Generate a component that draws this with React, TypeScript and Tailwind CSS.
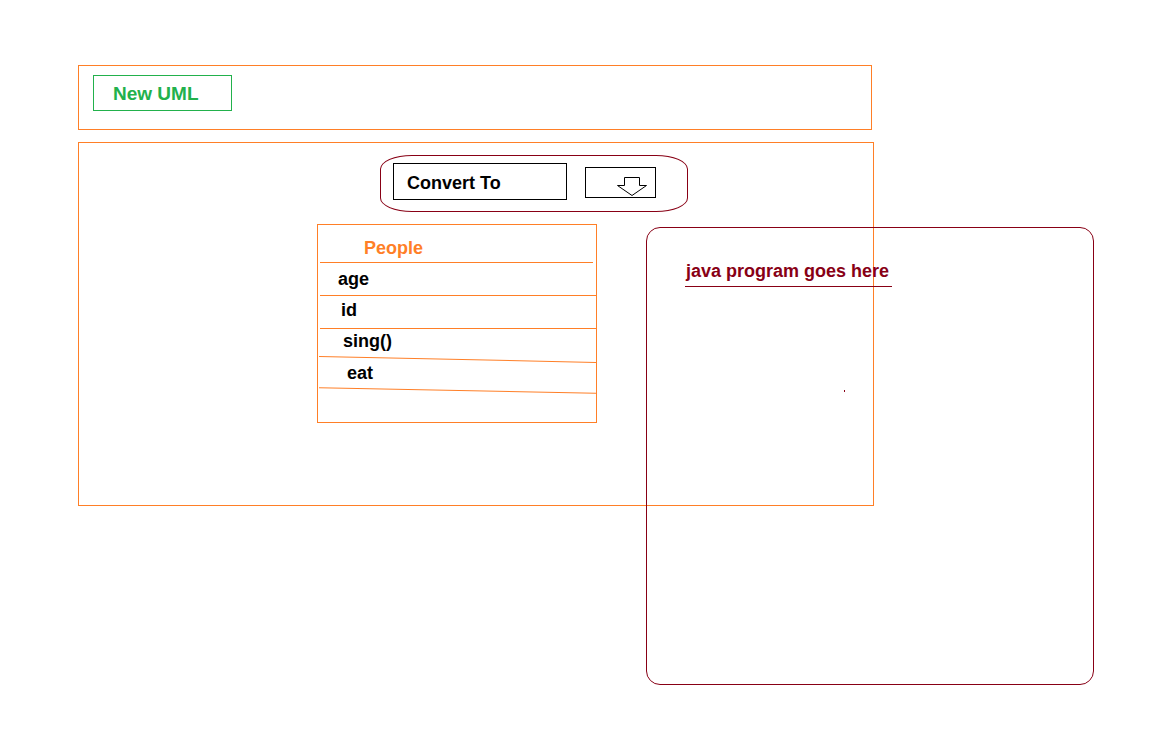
import type { FC } from "react";

const fields = [
  { name: "age", pt: "pt-[7px]", pl: "pl-[18px]" },
  { name: "id", pt: "pt-[5px]", pl: "pl-[21px]" },
];

const DownArrow: FC = () => (
  <svg width="71" height="31" viewBox="0 0 71 31" className="block">
    <polygon
      points="39.5,10.5 54.5,10.5 54.5,18.5 61.5,18.5 47,28.5 32.5,18.5 39.5,18.5"
      fill="white"
      stroke="black"
      strokeWidth="1"
    />
  </svg>
);

const ClassBox: FC = () => {
  return (
    <div className="ml-[238px] mt-[12px] w-[280px] h-[199px] border border-[#ff7f27] flex flex-col">
      <div className="h-[37px] pt-[14px] pl-[46px] leading-[18px] text-[18px] font-bold text-[#ff7f27]">People</div>
      <div className="ml-[2px] w-[273px] border-t border-[#ff7f27]" />
      {fields.map((f) => (
        <div key={f.name} className={`h-[33px] ${f.pt} ${f.pl} ml-[2px] border-b border-[#ff7f27] leading-[18px] text-[18px] font-bold text-black`}>
          {f.name}
        </div>
      ))}
      <div className="h-[30px] pt-[3px] pl-[25px] leading-[18px] text-[18px] font-bold text-black">sing()</div>
      <div className="ml-[1px] border-t border-[#ff7f27] rotate-[1.2deg]" />
      <div className="h-[30px] pt-[4px] pl-[29px] leading-[18px] text-[18px] font-bold text-black">eat</div>
      <div className="ml-[1px] border-t border-[#ff7f27] rotate-[1.1deg]" />
    </div>
  );
};

const App: FC = () => {
  return (
    <div className="relative w-[1151px] h-[745px] bg-white font-['Liberation_Sans',Arial,sans-serif] pt-[65px] pl-[78px]">
      <div className="w-[794px] h-[65px] border border-[#ff7f27] pt-[9px] pl-[14px]">
        <button className="w-[139px] h-[36px] border border-[#22b14c] flex items-center pl-[19px] pt-[2px] text-[19px] leading-[18px] font-bold text-[#22b14c]">
          New UML
        </button>
      </div>

      <div className="mt-[12px] w-[796px] h-[364px] border border-[#ff7f27]">
        <div className="ml-[301px] mt-[12px] w-[308px] h-[57px] border border-[#880015] rounded-[32px/14px] flex items-start pt-[7px] pl-[12px] gap-[18px]">
          <div className="w-[174px] h-[37px] border border-black pt-[10px] pl-[13px] leading-[18px] text-[18px] font-bold text-black">
            Convert To
          </div>
          <div className="mt-[4px] w-[71px] h-[31px] border border-black relative">
            <div className="absolute -left-px -top-px">
              <DownArrow />
            </div>
          </div>
        </div>
        <ClassBox />
      </div>

      <div className="absolute left-[646px] top-[227px] w-[448px] h-[458px] border border-[#880015] rounded-[14px] pt-[32px] pl-[38px]">
        <div className="inline-block w-[207px] pl-[1px] pb-[6px] border-b border-[#880015] leading-[18px] text-[18px] font-bold text-[#880015]">
          java program goes here
        </div>
      </div>
      <div className="absolute left-[844px] top-[390px] w-px h-[2px] bg-[#880015]" />
    </div>
  );
};

export default App;
